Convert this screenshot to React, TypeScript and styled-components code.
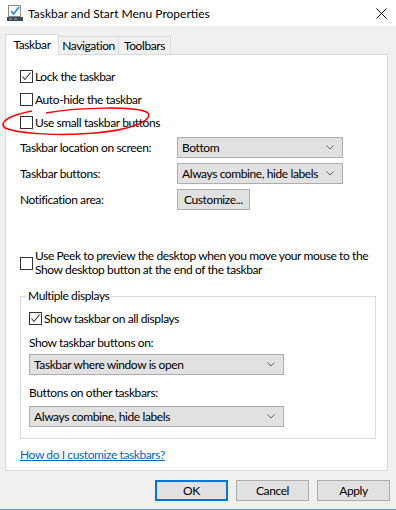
import React from 'react';
import styled, { createGlobalStyle } from 'styled-components';

const GlobalStyle = createGlobalStyle`
  html, body {
    margin: 0;
    padding: 0;
    background: #f0f0f0;
  }
  body {
    font-family: Lato, "Liberation Sans", sans-serif;
    font-size: 12px;
    letter-spacing: -0.4px;
    color: #000;
  }
`;

const Window = styled.div`
  position: relative;
  width: 396px;
  height: 510px;
  box-sizing: border-box;
  background: #f0f0f0;
  border-bottom: 1px solid #5b9bd5;
  display: flex;
  flex-direction: column;
  & > * {
    flex: none;
  }
`;

const TitleBar = styled.div`
  height: 26px;
  background: #fff;
  display: flex;
  align-items: center;
  padding: 0 9px 0 7px;
`;

const TitleText = styled.span`
  margin-left: 5px;
  font-size: 12px;
  letter-spacing: 0;
  color: #000;
`;

const CloseBox = styled.div`
  margin-left: auto;
  width: 11px;
  height: 11px;
  display: flex;
`;

const TabStrip = styled.div`
  display: flex;
  align-items: flex-end;
  margin: 8px 0 -1px 5px;
  height: 21px;
  position: relative;
  z-index: 1;
`;

const Tab = styled.div<{ $active?: boolean; $w: number }>`
  box-sizing: border-box;
  width: ${({ $w }) => $w}px;
  height: ${({ $active }) => ($active ? 21 : 18)}px;
  margin-bottom: ${({ $active }) => ($active ? 0 : 1)}px;
  border: 1px solid #d9d9d9;
  border-bottom: none;
  border-left: ${({ $active }) => ($active ? '1px solid #d9d9d9' : 'none')};
  background: ${({ $active }) => ($active ? '#fff' : '#f0f0f0')};
  display: flex;
  align-items: center;
  justify-content: center;
  padding-bottom: ${({ $active }) => ($active ? 2 : 0)}px;
`;

const Panel = styled.div`
  box-sizing: border-box;
  height: 417px;
  margin: 0 8px 0 5px;
  border: 1px solid #d9d9d9;
  background: #fff;
  padding: 10px 11px 0 14px;
  display: flex;
  flex-direction: column;
  & > * {
    flex: none;
  }
`;

const CheckRow = styled.label`
  display: flex;
  align-items: center;
  height: 23px;
  gap: 2px;
`;

const MultiCheckRow = styled(CheckRow)`
  height: auto;
  line-height: 14px;
`;

const Box = styled.span`
  box-sizing: border-box;
  flex: none;
  width: 13px;
  height: 13px;
  border: 1px solid #333;
  background: #fff;
  display: flex;
`;

const SettingGrid = styled.div`
  display: grid;
  grid-template-columns: 157px auto;
  row-gap: 5px;
  margin-top: 3px;
  align-items: center;
`;

const Select = styled.div<{ $w: number }>`
  box-sizing: border-box;
  width: ${({ $w }) => $w}px;
  height: 21px;
  background: #e1e1e1;
  border: 1px solid #adadad;
  display: flex;
  align-items: center;
  padding: 0 8px 0 4px;
  white-space: nowrap;
`;

const SelectText = styled.span`
  flex: 1;
`;

const Button = styled.div<{ $w: number; $focus?: boolean }>`
  box-sizing: border-box;
  width: ${({ $w }) => $w}px;
  height: 21px;
  background: #e1e1e1;
  border: ${({ $focus }) => ($focus ? '2px solid #0078d7' : '1px solid #adadad')};
  display: flex;
  align-items: center;
  justify-content: center;
  white-space: nowrap;
`;

const Peek = styled.div`
  margin-top: 39px;
`;

const Group = styled.fieldset`
  margin: 12px 0 0 0;
  padding: 0 8px 11px 8px;
  border: 1px solid #dcdcdc;
  display: flex;
  flex-direction: column;
  align-items: flex-start;
  & > * {
    flex: none;
  }
`;

const Legend = styled.legend`
  padding: 0 2px;
  margin-left: -3px;
  line-height: 14px;
`;

const GroupLabel = styled.div<{ $top: number }>`
  line-height: 16px;
  margin-top: ${({ $top }) => $top}px;
`;

const GroupSelectWrap = styled.div<{ $top: number }>`
  margin-top: ${({ $top }) => $top}px;
`;

const HelpLink = styled.a`
  margin-top: 8px;
  line-height: 16px;
  color: #0066cc;
  text-decoration: underline;
  align-self: flex-start;
`;

const ButtonRow = styled.div`
  display: flex;
  justify-content: flex-end;
  gap: 8px;
  margin-top: 9px;
  padding-right: 6px;
`;

const Annotation = styled.svg`
  position: absolute;
  left: 0;
  top: 0;
  pointer-events: none;
`;

const Check = ({ checked }: { checked?: boolean }) => (
  <Box>
    {checked && (
      <svg width="11" height="11" viewBox="0 0 11 11">
        <polyline points="1.5,5.5 4,8.5 9.5,1.5" fill="none" stroke="#333" strokeWidth="1.1" />
      </svg>
    )}
  </Box>
);

const Chevron = () => (
  <svg width="8" height="5" viewBox="0 0 8 5">
    <polyline points="0.5,0.5 4,4 7.5,0.5" fill="none" stroke="#606060" strokeWidth="1" />
  </svg>
);

const Dropdown = ({ value, width }: { value: string; width: number }) => (
  <Select $w={width}>
    <SelectText>{value}</SelectText>
    <Chevron />
  </Select>
);

const AppIcon = () => (
  <svg width="16" height="16" viewBox="0 0 16 16">
    <rect x="1.5" y="0.5" width="12" height="11" fill="#fff" stroke="#8a8a8a" />
    <polyline points="4,6 6.5,9 12,2" fill="none" stroke="#1e88e5" strokeWidth="1.6" />
    <rect x="0" y="12" width="16" height="4" fill="#3c4a55" />
    <rect x="2" y="13.5" width="3" height="1" fill="#a8b4bc" />
    <rect x="7" y="13.5" width="3" height="1" fill="#a8b4bc" />
  </svg>
);

export default function App() {
  return (
    <Window>
      <GlobalStyle />
      <TitleBar>
        <AppIcon />
        <TitleText>Taskbar and Start Menu Properties</TitleText>
        <CloseBox>
          <svg width="11" height="11" viewBox="0 0 11 11">
            <path d="M0.5 0.5 L10.5 10.5 M10.5 0.5 L0.5 10.5" stroke="#000" strokeWidth="1" />
          </svg>
        </CloseBox>
      </TitleBar>

      <TabStrip>
        <Tab $active $w={54}>Taskbar</Tab>
        <Tab $w={60}>Navigation</Tab>
        <Tab $w={52}>Toolbars</Tab>
      </TabStrip>

      <Panel>
        <CheckRow>
          <Check checked />
          Lock the taskbar
        </CheckRow>
        <CheckRow>
          <Check />
          Auto-hide the taskbar
        </CheckRow>
        <CheckRow>
          <Check />
          Use small taskbar buttons
        </CheckRow>

        <SettingGrid>
          <span>Taskbar location on screen:</span>
          <Dropdown value="Bottom" width={166} />
          <span>Taskbar buttons:</span>
          <Dropdown value="Always combine, hide labels" width={166} />
          <span>Notification area:</span>
          <Button $w={73}>Customize...</Button>
        </SettingGrid>

        <Peek>
          <MultiCheckRow>
            <Check />
            <span>
              Use Peek to preview the desktop when you move your mouse to the
              <br />
              Show desktop button at the end of the taskbar
            </span>
          </MultiCheckRow>
        </Peek>

        <Group>
          <Legend>Multiple displays</Legend>
          <CheckRow style={{ marginTop: 4 }}>
            <Check checked />
            Show taskbar on all displays
          </CheckRow>
          <GroupLabel $top={5}>Show taskbar buttons on:</GroupLabel>
          <GroupSelectWrap $top={3}>
            <Dropdown value="Taskbar where window is open" width={255} />
          </GroupSelectWrap>
          <GroupLabel $top={10}>Buttons on other taskbars:</GroupLabel>
          <GroupSelectWrap $top={5}>
            <Dropdown value="Always combine, hide labels" width={255} />
          </GroupSelectWrap>
        </Group>

        <HelpLink href="#">How do I customize taskbars?</HelpLink>
      </Panel>

      <ButtonRow>
        <Button $w={73} $focus>OK</Button>
        <Button $w={73}>Cancel</Button>
        <Button $w={73}>Apply</Button>
      </ButtonRow>

      <Annotation width="396" height="510" viewBox="0 0 396 510">
        <path
          d="M46 113 C80 107 138 106 148 113 C153 120 132 130 95 133 C60 136 20 134 5 128 C-2 122 10 115 32 111"
          fill="none"
          stroke="#ff0000"
          strokeWidth="1.5"
        />
      </Annotation>
    </Window>
  );
}
